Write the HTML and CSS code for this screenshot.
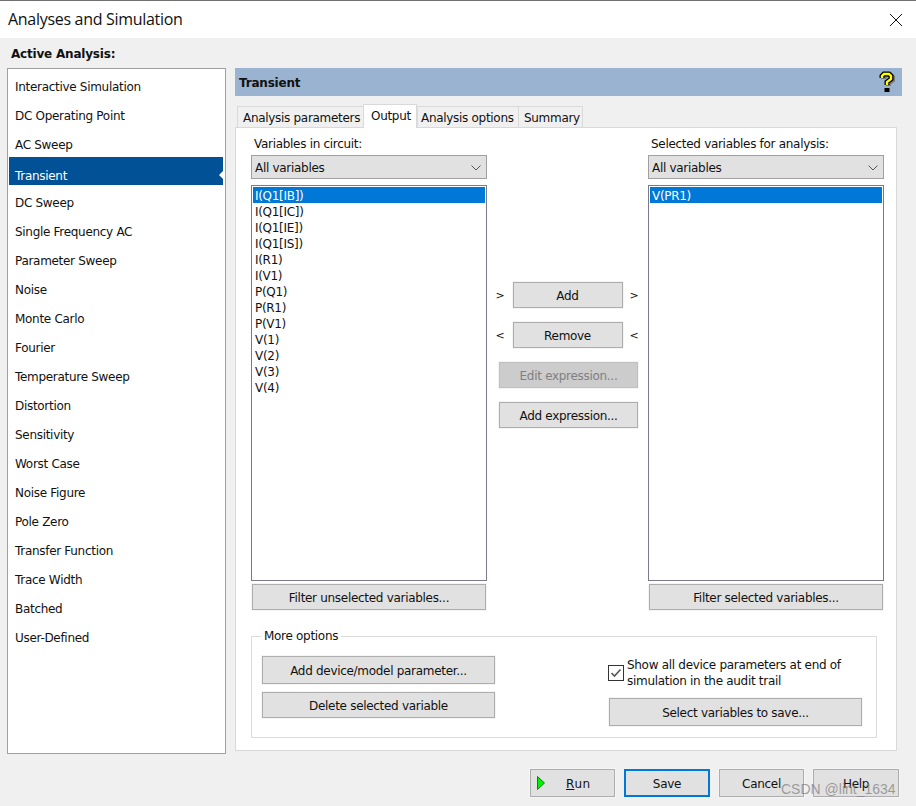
FILE: index.html
```html
<!DOCTYPE html>
<html lang="en">
<head>
    <meta charset="UTF-8">
    <meta name="viewport" content="width=device-width, initial-scale=1.0">
    <title>Analyses and Simulation</title>
    <link rel="stylesheet" href="styles.css">
</head>
<body>
    <div class="dialog">
        <header class="titlebar">
            <span class="titlebar-text">Analyses and Simulation</span>
            <svg class="close-icon" width="14" height="14" viewBox="0 0 14 14">
                <path d="M1 1L13 13M13 1L1 13" stroke="#111" stroke-width="1" fill="none"/>
            </svg>
        </header>

        <div class="active-label">Active Analysis:</div>

        <div class="main">
            <ul class="analysis-list">
                <li class="analysis-item">Interactive Simulation</li>
                <li class="analysis-item">DC Operating Point</li>
                <li class="analysis-item">AC Sweep</li>
                <li class="analysis-item analysis-item-active">Transient</li>
                <li class="analysis-item">DC Sweep</li>
                <li class="analysis-item">Single Frequency AC</li>
                <li class="analysis-item">Parameter Sweep</li>
                <li class="analysis-item">Noise</li>
                <li class="analysis-item">Monte Carlo</li>
                <li class="analysis-item">Fourier</li>
                <li class="analysis-item">Temperature Sweep</li>
                <li class="analysis-item">Distortion</li>
                <li class="analysis-item">Sensitivity</li>
                <li class="analysis-item">Worst Case</li>
                <li class="analysis-item">Noise Figure</li>
                <li class="analysis-item">Pole Zero</li>
                <li class="analysis-item">Transfer Function</li>
                <li class="analysis-item">Trace Width</li>
                <li class="analysis-item">Batched</li>
                <li class="analysis-item">User-Defined</li>
            </ul>

            <section class="content">
                <div class="content-head">
                    <span class="content-title">Transient</span>
                    <svg class="help-icon" width="16" height="22" viewBox="0 0 16 22">
                        <path d="M3 7V5L5 3H10L12 5V8L8 11V14" transform="translate(1.5 1)" stroke="#777" stroke-width="5" fill="none"/>
                        <path d="M3 7V5L5 3H10L12 5V8L8 11V14" stroke="#000" stroke-width="5" fill="none"/>
                        <path d="M3 7V5L5 3H10L12 5V8L8 11V14" stroke="#ff0" stroke-width="2.4" fill="none"/>
                        <rect x="5.5" y="17" width="5" height="4" fill="#000"/>
                    </svg>
                </div>

                <div class="tabs">
                    <span class="tab">Analysis parameters</span>
                    <span class="tab tab-active">Output</span>
                    <span class="tab">Analysis options</span>
                    <span class="tab">Summary</span>
                </div>

                <div class="panel">
                    <div class="vars">
                        <div class="var-col">
                            <label class="var-label">Variables in circuit:</label>
                            <div class="select">
                                <span>All variables</span>
                                <svg width="10" height="6" viewBox="0 0 10 6"><path d="M0.5 0.5L5 5L9.5 0.5" stroke="#555" fill="none"/></svg>
                            </div>
                            <ul class="listbox">
                                <li class="listbox-item listbox-item-selected">I(Q1[IB])</li>
                                <li class="listbox-item">I(Q1[IC])</li>
                                <li class="listbox-item">I(Q1[IE])</li>
                                <li class="listbox-item">I(Q1[IS])</li>
                                <li class="listbox-item">I(R1)</li>
                                <li class="listbox-item">I(V1)</li>
                                <li class="listbox-item">P(Q1)</li>
                                <li class="listbox-item">P(R1)</li>
                                <li class="listbox-item">P(V1)</li>
                                <li class="listbox-item">V(1)</li>
                                <li class="listbox-item">V(2)</li>
                                <li class="listbox-item">V(3)</li>
                                <li class="listbox-item">V(4)</li>
                            </ul>
                            <button class="btn btn-filter">Filter unselected variables...</button>
                        </div>

                        <div class="var-actions">
                            <div class="move-row">
                                <span class="move-arrow">&gt;</span>
                                <button class="btn btn-move">Add</button>
                                <span class="move-arrow">&gt;</span>
                            </div>
                            <div class="move-row">
                                <span class="move-arrow">&lt;</span>
                                <button class="btn btn-move">Remove</button>
                                <span class="move-arrow">&lt;</span>
                            </div>
                            <button class="btn btn-expr btn-disabled">Edit expression...</button>
                            <button class="btn btn-expr">Add expression...</button>
                        </div>

                        <div class="var-col">
                            <label class="var-label">Selected variables for analysis:</label>
                            <div class="select">
                                <span>All variables</span>
                                <svg width="10" height="6" viewBox="0 0 10 6"><path d="M0.5 0.5L5 5L9.5 0.5" stroke="#555" fill="none"/></svg>
                            </div>
                            <ul class="listbox">
                                <li class="listbox-item listbox-item-selected">V(PR1)</li>
                            </ul>
                            <button class="btn btn-filter">Filter selected variables...</button>
                        </div>
                    </div>

                    <fieldset class="more">
                        <legend class="more-legend">More options</legend>
                        <div class="more-left">
                            <button class="btn btn-param">Add device/model parameter...</button>
                            <button class="btn btn-delete">Delete selected variable</button>
                        </div>
                        <div class="more-right">
                            <div class="check-row">
                                <span class="checkbox">
                                    <svg width="14" height="14" viewBox="0 0 14 14"><path d="M2.5 7L5.5 10L11.5 3.5" stroke="#555" stroke-width="1.6" fill="none"/></svg>
                                </span>
                                <span class="check-text">Show all device parameters at end of simulation in the audit trail</span>
                            </div>
                            <button class="btn btn-save-vars">Select variables to save...</button>
                        </div>
                    </fieldset>
                </div>
            </section>
        </div>

        <footer class="actions">
            <button class="btn btn-action btn-run">
                <svg class="run-icon" width="8" height="14" viewBox="0 0 8 14"><path d="M0.5 0.5L7.5 7L0.5 13.5Z" fill="#00f000" stroke="#0a5a0a" stroke-width="0.8"/></svg>
                <span class="run-text"><u>R</u>un</span>
            </button>
            <button class="btn btn-action btn-default">Save</button>
            <button class="btn btn-action">Cancel</button>
            <button class="btn btn-action btn-help">Help</button>
        </footer>
    </div>

    <div class="watermark">CSDN @lint_1634</div>
</body>
</html>
```

FILE: styles.css
```css
* {
    margin: 0;
    padding: 0;
    box-sizing: border-box;
}

html, body {
    width: 916px;
    height: 806px;
    overflow: hidden;
}

body {
    background-color: #f0f0f0;
    color: #111;
    font-family: "DejaVu Sans", sans-serif;
    font-size: 12px;
    letter-spacing: -0.3px;
    position: relative;
}

ul {
    list-style: none;
}

.dialog {
    display: flex;
    flex-direction: column;
    height: 806px;
}

.titlebar {
    height: 38px;
    background: #fff;
    border-top: 1px solid #707070;
    display: flex;
    align-items: center;
    justify-content: space-between;
    padding: 0 13px 2px 8px;
}

.titlebar-text {
    font-family: "Open Sans", sans-serif;
    font-size: 16px;
    letter-spacing: -0.3px;
}

.close-icon {
    margin-top: 2px;
}

.active-label {
    height: 30px;
    line-height: 33px;
    padding-left: 11px;
    font-weight: bold;
    font-size: 12px;
    letter-spacing: -0.2px;
}

.main {
    display: flex;
    align-items: flex-start;
    gap: 9px;
    padding-left: 7px;
}

.analysis-list {
    width: 219px;
    height: 686px;
    background: #fff;
    border: 1px solid #a0a0a0;
    padding: 3px 2px 0 1px;
}

.analysis-item {
    height: 29px;
    line-height: 31px;
    padding-left: 6px;
}

.analysis-item-active {
    height: 28px;
    margin: -2px 0 3px;
    padding-top: 3px;
    line-height: 32px;
    background: #005196;
    color: #fff;
    position: relative;
}

.analysis-item-active::after {
    content: "";
    position: absolute;
    right: 0;
    top: 14px;
    border: 4px solid transparent;
    border-right-color: #fff;
    border-left-width: 0;
}

.content {
    width: 667px;
}

.content-head {
    height: 28px;
    background: #9ab3d0;
    display: flex;
    align-items: center;
    justify-content: space-between;
    padding: 0 7px 0 4px;
}

.content-title {
    font-weight: bold;
    padding-top: 1px;
    letter-spacing: -0.2px;
}

.tabs {
    display: flex;
    align-items: flex-end;
    height: 31px;
    padding-left: 2px;
}

.tab {
    height: 21px;
    line-height: 23px;
    padding: 0 5px;
    background: #f0f0f0;
    border: 1px solid #d9d9d9;
    border-bottom: none;
    margin-right: -1px;
    white-space: nowrap;
}

.tab:nth-child(1) { width: 127px; }
.tab:nth-child(3) { width: 102px; margin-left: 1px; padding: 0 3px; }
.tab:nth-child(4) { width: 65px; }

.tab-active {
    width: 54px;
    height: 24px;
    line-height: 22px;
    padding: 0 7px;
    background: #fff;
    margin-bottom: -1px;
    position: relative;
    z-index: 1;
}

.panel {
    width: 662px;
    height: 624px;
    background: #fff;
    border: 1px solid #d9d9d9;
    padding: 7px 12px 0 15px;
}

.vars {
    display: grid;
    grid-template-columns: 236px 161px 236px;
}

.var-label {
    display: block;
    height: 20px;
    line-height: 19px;
    padding-left: 3px;
}

.select {
    height: 24px;
    background: #e1e1e1;
    border: 1px solid #a0a0a0;
    display: flex;
    align-items: center;
    justify-content: space-between;
    padding: 1px 5px 0 3px;
}

.listbox {
    height: 396px;
    margin-top: 6px;
    border: 1px solid #7a7a8a;
    padding: 1px;
    background: #fff;
}

.listbox-item {
    height: 16px;
    line-height: 18px;
    padding-left: 2px;
}

.listbox-item-selected {
    background: #0078d7;
    color: #fff;
}

.btn {
    display: block;
    background: #e1e1e1;
    border: 1px solid #adadad;
    outline: 1px solid #f5f5f5;
    font-family: inherit;
    font-size: 12px;
    letter-spacing: inherit;
    color: #111;
    padding-top: 2px;
}

.btn-filter {
    width: 234px;
    height: 26px;
    margin: 3px 1px 0;
}

.var-actions {
    display: flex;
    flex-direction: column;
    align-items: center;
    gap: 14px;
    padding-top: 147px;
}

.move-row {
    display: flex;
    align-items: center;
    justify-content: center;
    gap: 7px;
    margin-right: 2px;
}

.move-arrow {
    width: 8px;
    text-align: center;
    font-size: 11px;
}

.move-arrow:first-child {
    margin-right: 2px;
}

.btn-move {
    width: 110px;
    height: 26px;
}

.btn-expr {
    width: 139px;
    height: 26px;
    margin-left: 2px;
}

.btn-disabled {
    background: #cccccc;
    border-color: #bfbfbf;
    color: #808080;
}

.more {
    width: 626px;
    height: 109px;
    margin-top: 19px;
    border: 1px solid #dcdcdc;
    display: flex;
    justify-content: space-between;
    padding: 13px 14px 0 10px;
}

.more-legend {
    margin-left: -1px;
    padding: 0 3px;
}

.more-left {
    display: flex;
    flex-direction: column;
    gap: 8px;
}

.btn-param {
    width: 233px;
    height: 28px;
}

.btn-delete {
    width: 233px;
    height: 26px;
}

.more-right {
    width: 253px;
}

.check-row {
    display: flex;
    align-items: center;
    gap: 3px;
    height: 32px;
    margin: 1px 0 0 -1px;
}

.checkbox {
    width: 16px;
    height: 16px;
    flex-shrink: 0;
    border: 1px solid #333;
    background: #fff;
    display: flex;
}

.check-text {
    line-height: 16px;
}

.btn-save-vars {
    width: 253px;
    height: 28px;
    margin-top: 9px;
}

.actions {
    display: flex;
    gap: 9px;
    padding: 15px 0 0 530px;
}

.btn-action {
    width: 85px;
    height: 28px;
}

.btn-default {
    width: 86px;
    border: 2px solid #0078d7;
    outline: none;
}

.btn-help {
    width: 86px;
}

.btn-run {
    display: flex;
    align-items: center;
    padding: 0 0 0 6px;
}

.run-text {
    margin-left: 21px;
    padding-top: 1px;
    letter-spacing: 0.6px;
}

.watermark {
    position: absolute;
    left: 781px;
    top: 781px;
    font-family: "Liberation Sans", sans-serif;
    font-size: 14px;
    letter-spacing: 0;
    color: rgba(130, 130, 130, 0.75);
}
```
